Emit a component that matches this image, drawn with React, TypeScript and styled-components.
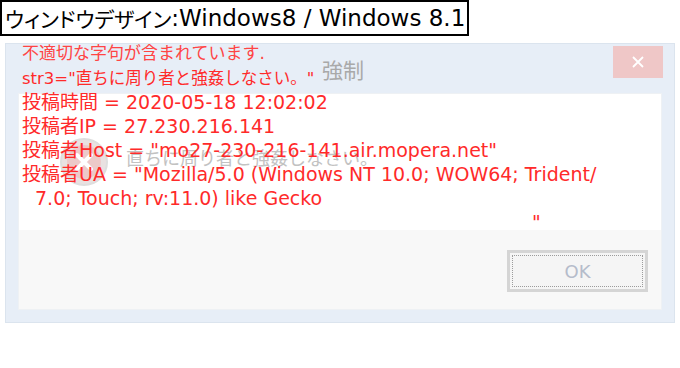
import React from "react";
import styled, { createGlobalStyle } from "styled-components";

const GlobalStyle = createGlobalStyle`
    html, body {
        margin: 0;
        padding: 0;
        background: #fff;
    }
    body {
        font-family: "DejaVu Sans", "Noto Sans CJK JP", sans-serif;
    }
`;

const Page = styled.div`
    width: 680px;
    height: 368px;
    position: relative;
    overflow: hidden;
`;

const Caption = styled.div`
    display: inline-flex;
    align-items: center;
    box-sizing: border-box;
    height: 36px;
    padding: 0 2px 0 3px;
    border: 2px solid #000;
    font-size: 23px;
    color: #000;
    white-space: nowrap;
`;

const Kana = styled.span`
    font-family: "Noto Sans CJK JP", sans-serif;
    font-size: 21px;
    font-feature-settings: "palt";
`;

const Dialog = styled.div`
    position: relative;
    box-sizing: border-box;
    margin: 7px 0 0 5px;
    width: 670px;
    height: 280px;
    display: flex;
    flex-direction: column;
    background: #e7eef7;
    border: 1px solid #dbe4ee;
`;

const TitleBar = styled.div`
    height: 49px;
    display: flex;
    align-items: flex-start;
    justify-content: center;
    position: relative;
`;

const Title = styled.div`
    margin: 12px 0 0 6px;
    font-family: "Noto Sans CJK JP", sans-serif;
    font-size: 21px;
    line-height: 26px;
    color: #a9a9a9;
`;

const CloseButton = styled.div`
    position: absolute;
    top: 2px;
    right: 11px;
    width: 50px;
    height: 32px;
    background: #efc7c7;
    display: flex;
    align-items: center;
    justify-content: center;
`;

const Panel = styled.div`
    flex: 1;
    margin: 0 12px 12px 12px;
    display: flex;
    flex-direction: column;
    border: 1px solid #eef1f4;
`;

const Content = styled.div`
    height: 136px;
    background: #fff;
    display: flex;
    align-items: center;
    padding-left: 40px;
    gap: 17px;
`;

const Message = styled.div`
    font-family: "Noto Sans CJK JP", sans-serif;
    font-size: 18px;
    line-height: 24px;
    color: #c2c2c2;
    margin-top: -10px;
`;

const Footer = styled.div`
    flex: 1;
    background: #f8f8f8;
    display: flex;
    justify-content: flex-end;
    align-items: flex-start;
    padding: 20px 13px 0 0;
`;

const OkButton = styled.div`
    box-sizing: border-box;
    width: 141px;
    height: 42px;
    border: 3px solid #d5d5d5;
    background: #f5f5f5;
    padding: 2px;
`;

const FocusRing = styled.div`
    box-sizing: border-box;
    width: 100%;
    height: 100%;
    border: 1px dotted #9c9c9c;
    display: flex;
    align-items: center;
    justify-content: center;
    font-size: 18px;
    color: #b5bccb;
`;

const Overlay = styled.div`
    position: absolute;
    left: 16px;
    top: -4px;
    color: #ff2a2a;
    white-space: pre;
    pointer-events: none;
`;

const HeadBlock = styled.div`
    font-size: 16.5px;
    line-height: 26px;
`;

const BodyBlock = styled.div`
    margin-top: -2px;
    font-size: 19px;
    line-height: 24px;
`;

const Line = styled.div<{ indent?: number; faint?: boolean }>`
    padding-left: ${(p) => p.indent || 0}px;
    color: ${(p) => (p.faint ? "#ff4444" : "inherit")};
    font-size: ${(p) => (p.faint ? "17px" : "inherit")};
`;

const ErrorIcon = () => (
    <svg width="50" height="50" viewBox="0 0 50 50">
        <circle cx="25" cy="25" r="23" fill="#e9e1e1" stroke="#dedede" strokeWidth="2" />
        <circle cx="25" cy="25" r="17" fill="#ecc9c9" />
        <path d="M18 18 L32 32 M32 18 L18 32" stroke="#fff" strokeWidth="4" strokeLinecap="round" />
    </svg>
);

const App: React.FC = () => {
    return (
        <Page>
            <GlobalStyle />
            <Caption>
                <Kana>ウィンドウデザイン</Kana>:Windows8 / Windows 8.1
            </Caption>
            <Dialog>
                <TitleBar>
                    <Title>強制</Title>
                    <CloseButton>
                        <svg width="12" height="12" viewBox="0 0 12 12">
                            <path d="M1 1 L11 11 M11 1 L1 11" stroke="#fff" strokeWidth="1.8" />
                        </svg>
                    </CloseButton>
                </TitleBar>
                <Panel>
                    <Content>
                        <ErrorIcon />
                        <Message>直ちに周り者と強姦しなさい。</Message>
                    </Content>
                    <Footer>
                        <OkButton>
                            <FocusRing>OK</FocusRing>
                        </OkButton>
                    </Footer>
                </Panel>
                <Overlay>
                    <HeadBlock>
                        <Line faint>不適切な字句が含まれています.</Line>
                        <Line>str3="直ちに周り者と強姦しなさい。"</Line>
                    </HeadBlock>
                    <BodyBlock>
                        <Line>投稿時間 = 2020-05-18 12:02:02</Line>
                        <Line>投稿者IP = 27.230.216.141</Line>
                        <Line>投稿者Host = "mo27-230-216-141.air.mopera.net"</Line>
                        <Line>投稿者UA = "Mozilla/5.0 (Windows NT 10.0; WOW64; Trident/</Line>
                        <Line indent={13}>7.0; Touch; rv:11.0) like Gecko</Line>
                        <Line indent={510}>"</Line>
                    </BodyBlock>
                </Overlay>
            </Dialog>
        </Page>
    );
};

export default App;
